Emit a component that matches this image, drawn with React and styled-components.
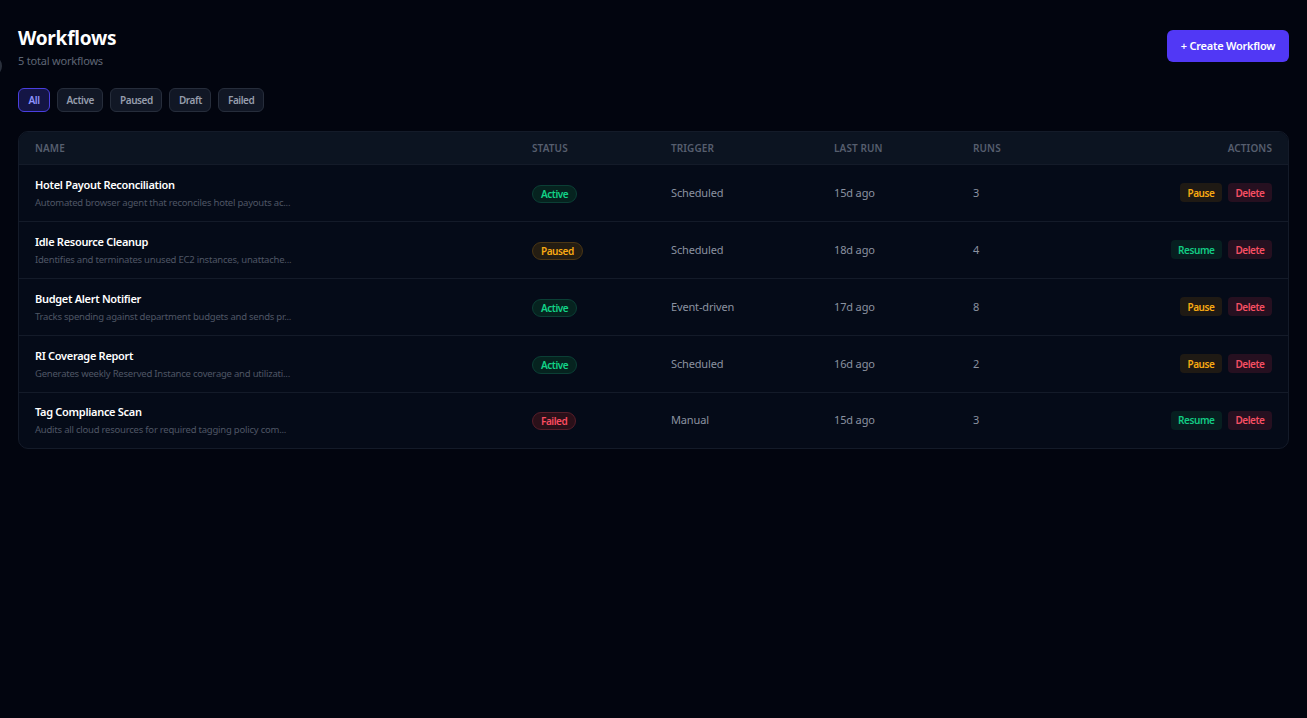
import React from "react";
import styled, { createGlobalStyle } from "styled-components";

const GlobalStyle = createGlobalStyle`
  html, body {
    margin: 0;
    min-height: 100%;
    background: #02050f;
    font-family: "Noto Sans", "Open Sans", sans-serif;
  }
`;

const Page = styled.div`
  position: relative;
  min-height: 718px;
  padding: 24px 18px 0;
  box-sizing: border-box;
  overflow: hidden;
`;

const EdgeDot = styled.span`
  position: absolute;
  left: -10px;
  top: 58px;
  width: 12px;
  height: 16px;
  border-radius: 50%;
  background: #2a303c;
`;

const Header = styled.header`
  display: flex;
  justify-content: space-between;
  align-items: flex-start;
  margin-bottom: 19px;
`;

const Title = styled.h1`
  margin: 0;
  font-size: 19px;
  line-height: 28px;
  font-weight: 700;
  letter-spacing: -0.25px;
  color: #ffffff;
`;

const Subtitle = styled.p`
  margin: 1px 0 0;
  font-size: 11px;
  line-height: 16px;
  letter-spacing: -0.2px;
  color: #5f6675;
`;

const CreateButton = styled.button`
  margin-top: 6px;
  height: 32px;
  width: 122px;
  padding: 0 0 1px;
  border: none;
  border-radius: 6px;
  background: #5138f5;
  color: #ffffff;
  font: 600 11px "Noto Sans", sans-serif;
  letter-spacing: -0.25px;
`;

const Filters = styled.div`
  display: flex;
  gap: 7px;
  margin-bottom: 19px;
`;

const Filter = styled.button`
  height: 24px;
  padding: 0 8.6px;
  min-width: 32px;
  box-sizing: border-box;
  border-radius: 6px;
  border: 1px solid ${(p) => (p.$active ? "#4a3fe0" : "#262d3b")};
  background: ${(p) => (p.$active ? "#141545" : "#111725")};
  color: ${(p) => (p.$active ? "#8f93ff" : "#969dac")};
  font: 600 10px "Noto Sans", sans-serif;
  letter-spacing: -0.45px;
`;

const Card = styled.section`
  border: 1px solid #141b29;
  border-radius: 10px;
  background: #050b18;
  overflow: hidden;
`;

const columns = "497px 139px 163px 139px 100px 1fr";

const HeadRow = styled.div`
  display: grid;
  grid-template-columns: ${columns};
  align-items: center;
  height: 32px;
  padding: 0 16px;
  background: #0c1421;
  border-bottom: 1px solid #141b29;
`;

const HeadCell = styled.div`
  font-size: 10px;
  font-weight: 600;
  letter-spacing: 0.1px;
  color: #565e6e;
  text-align: ${(p) => (p.$right ? "right" : "left")};
`;

const Row = styled.div`
  display: grid;
  grid-template-columns: ${columns};
  align-items: center;
  height: 56px;
  padding: 0 16px;

  & + & {
    border-top: 1px solid #141b29;
  }

  &:last-child {
    height: 55px;
  }
`;

const Name = styled.div`
  font-size: 11px;
  line-height: 16px;
  font-weight: 600;
  letter-spacing: -0.3px;
  color: #ffffff;
`;

const Description = styled.div`
  margin-top: 3px;
  font-size: 9.5px;
  line-height: 14px;
  letter-spacing: -0.22px;
  color: #4f5665;
`;

const statusColors = {
  Active: { fg: "#12d488", bg: "#06231f", line: "#0b3f35" },
  Paused: { fg: "#f8aa12", bg: "#241d12", line: "#4a3615" },
  Failed: { fg: "#fa4c60", bg: "#2a1019", line: "#561d29" },
};

const BadgeCell = styled.div`
  display: flex;
  align-items: center;
  padding-top: 1px;
`;

const Badge = styled.span`
  height: 18px;
  padding: 0 8px;
  box-sizing: border-box;
  border-radius: 9px;
  line-height: 16px;
  font-size: 10px;
  font-weight: 600;
  letter-spacing: -0.45px;
  color: ${(p) => statusColors[p.$status].fg};
  background: ${(p) => statusColors[p.$status].bg};
  border: 1px solid ${(p) => statusColors[p.$status].line};
`;

const Cell = styled.div`
  padding-bottom: 2px;
  font-size: 11px;
  letter-spacing: -0.15px;
  color: #8b92a0;
`;

const Actions = styled.div`
  display: flex;
  justify-content: flex-end;
  gap: 6px;
  padding-bottom: 1px;
`;

const actionColors = {
  Pause: { fg: "#f8aa12", bg: "#1f1a14" },
  Resume: { fg: "#12cc84", bg: "#071f20" },
  Delete: { fg: "#f64f63", bg: "#261020" },
};

const ActionButton = styled.button`
  height: 19px;
  padding: 0 7.5px;
  border: none;
  border-radius: 4px;
  color: ${(p) => actionColors[p.$kind].fg};
  background: ${(p) => actionColors[p.$kind].bg};
  font: 600 10px "Noto Sans", sans-serif;
  letter-spacing: -0.45px;
`;

const workflows = [
  { name: "Hotel Payout Reconciliation", desc: "Automated browser agent that reconciles hotel payouts ac...", status: "Active", trigger: "Scheduled", last: "15d ago", runs: 3 },
  { name: "Idle Resource Cleanup", desc: "Identifies and terminates unused EC2 instances, unattache...", status: "Paused", trigger: "Scheduled", last: "18d ago", runs: 4 },
  { name: "Budget Alert Notifier", desc: "Tracks spending against department budgets and sends pr...", status: "Active", trigger: "Event-driven", last: "17d ago", runs: 8 },
  { name: "RI Coverage Report", desc: "Generates weekly Reserved Instance coverage and utilizati...", status: "Active", trigger: "Scheduled", last: "16d ago", runs: 2 },
  { name: "Tag Compliance Scan", desc: "Audits all cloud resources for required tagging policy com...", status: "Failed", trigger: "Manual", last: "15d ago", runs: 3 },
];

const filters = ["All", "Active", "Paused", "Draft", "Failed"];

export default function App() {
  return (
    <Page>
      <GlobalStyle />
      <EdgeDot />
      <Header>
        <div>
          <Title>Workflows</Title>
          <Subtitle>5 total workflows</Subtitle>
        </div>
        <CreateButton>+ Create Workflow</CreateButton>
      </Header>

      <Filters>
        {filters.map((f) => (
          <Filter key={f} $active={f === "All"}>
            {f}
          </Filter>
        ))}
      </Filters>

      <Card>
        <HeadRow>
          <HeadCell>NAME</HeadCell>
          <HeadCell>STATUS</HeadCell>
          <HeadCell>TRIGGER</HeadCell>
          <HeadCell>LAST RUN</HeadCell>
          <HeadCell>RUNS</HeadCell>
          <HeadCell $right>ACTIONS</HeadCell>
        </HeadRow>
        {workflows.map((w) => {
          const action = w.status === "Active" ? "Pause" : "Resume";
          return (
            <Row key={w.name}>
              <div>
                <Name>{w.name}</Name>
                <Description>{w.desc}</Description>
              </div>
              <BadgeCell>
                <Badge $status={w.status}>{w.status}</Badge>
              </BadgeCell>
              <Cell>{w.trigger}</Cell>
              <Cell>{w.last}</Cell>
              <Cell>{w.runs}</Cell>
              <Actions>
                <ActionButton $kind={action}>{action}</ActionButton>
                <ActionButton $kind="Delete">Delete</ActionButton>
              </Actions>
            </Row>
          );
        })}
      </Card>
    </Page>
  );
}
